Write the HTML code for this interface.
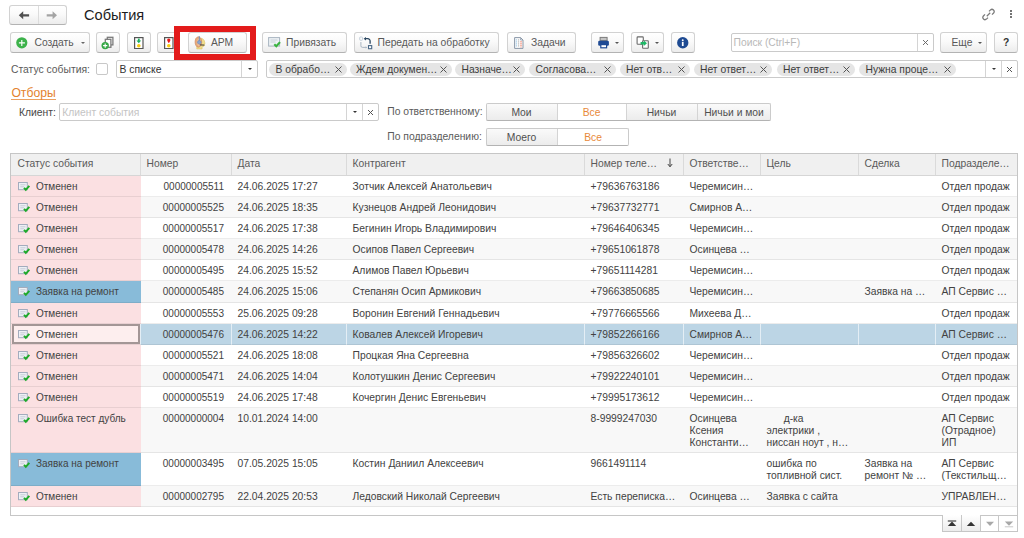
<!DOCTYPE html><html><head><meta charset="utf-8"><style>
*{box-sizing:border-box;margin:0;padding:0}
html,body{width:1024px;height:538px;overflow:hidden;background:#fff}
body{position:relative;font-family:"Liberation Sans",sans-serif;font-size:10.3px;color:#404040}
.ab{position:absolute}
.btn{position:absolute;top:32px;height:21px;border:1px solid #d2d2d2;border-bottom-color:#b3b3b3;border-radius:3px;background:linear-gradient(#ffffff 0%,#fafafa 45%,#ececec 100%);color:#505050;white-space:nowrap}
.t{position:absolute;white-space:nowrap;line-height:1}
.bt{position:absolute;white-space:nowrap;line-height:1;top:37.9px;color:#585858}
.fld{position:absolute;border:1px solid #cacaca;background:#fff;border-radius:2px}
.tag{position:absolute;height:13px;top:63px;border-radius:6.5px;background:#e5e5e5;color:#3c3c3c}
.tag span{position:absolute;left:6.5px;top:1.5px;line-height:1;white-space:nowrap}
.tag i{position:absolute;right:5px;top:3px;width:7px;height:7px}
.dd{position:absolute;width:0;height:0;border-left:2px solid transparent;border-right:2px solid transparent;border-top:2.5px solid #444}
.row{position:absolute;left:11px;width:1006px}
.c{position:absolute;top:0;height:100%;overflow:hidden}
.c span{position:absolute;white-space:nowrap;line-height:11.8px;color:#424242}
.sep{position:absolute;width:1px;background:#d4d4d4}
</style></head><body>
<div class="btn" style="left:9px;top:5px;width:58px;height:20px"></div>
<div class="ab" style="left:38px;top:6px;width:1px;height:18px;background:#dcdcdc"></div>
<svg class="ab" style="left:18px;top:11px" width="12" height="9" viewBox="0 0 12 9"><path d="M0.8 4.3L5.2 0.3V3.2H11.1V5.4H5.2V8.3Z" fill="#505050"/></svg>
<svg class="ab" style="left:46px;top:11px" width="12" height="9" viewBox="0 0 12 9"><path d="M11 4.3L6.6 0.3V3.2H0.7V5.4H6.6V8.3Z" fill="#a4a4a4"/></svg>
<div class="t" style="left:84px;top:8px;font-size:14.6px;color:#1c1c1c">События</div>
<svg class="ab" style="left:981.5px;top:8px" width="13" height="13" viewBox="0 0 13 13"><path d="M7 3.4l1.5-1.5a2.2 2.2 0 0 1 3.1 3.1L10 6.6M6 9.6l-1.5 1.5a2.2 2.2 0 0 1-3.1-3.1L3 6.4M4.8 8.2l3.4-3.4" stroke="#7a7a7a" stroke-width="1.25" fill="none"/></svg>
<div class="ab" style="left:1009.8px;top:10px;width:2.4px;height:2.4px;background:#747474"></div>
<div class="ab" style="left:1009.8px;top:13px;width:2.4px;height:2.4px;background:#747474"></div>
<div class="ab" style="left:1009.8px;top:16px;width:2.4px;height:2.4px;background:#747474"></div>
<div class="btn" style="left:10px;width:80px"></div>
<svg class="ab" style="left:16.4px;top:36.8px" width="12" height="12" viewBox="0 0 12 12"><circle cx="5.8" cy="5.8" r="5.6" fill="#3db24b"/><path d="M5.8 2.9v6M2.9 5.8h6" stroke="#fff" stroke-width="1.15"/></svg>
<div class="bt" style="left:34.5px">Создать</div>
<div class="dd" style="left:80.8px;top:42.3px;border-top-color:#666"></div>
<div class="btn" style="left:96px;width:24px"></div>
<svg class="ab" style="left:101px;top:36px" width="13" height="14" viewBox="0 0 13 14"><rect x="6.3" y="1.3" width="5.6" height="7.6" fill="#fff" stroke="#7a7a7a" stroke-width="1.3"/><rect x="4.3" y="3.3" width="5.6" height="8" fill="#fff" stroke="#7a7a7a" stroke-width="1.3"/><circle cx="4.2" cy="9.6" r="3.7" fill="#36a846"/><path d="M4.2 7.5v4.2M2.1 9.6h4.2" stroke="#fff" stroke-width="1.1"/></svg>
<div class="btn" style="left:127px;width:24px"></div>
<svg class="ab" style="left:134px;top:37px" width="10" height="12" viewBox="0 0 10 12"><rect x="0.6" y="0.6" width="8.4" height="11" fill="#fff" stroke="#555" stroke-width="1.2"/><path d="M4.8 1.6v2.6" stroke="#1fb060" stroke-width="1.8"/><path d="M2.4 3.6h4.8L4.8 6.2z" fill="#1fb060"/><circle cx="4.8" cy="8.8" r="1.8" fill="#f8cc10"/></svg>
<div class="btn" style="left:157px;width:24px"></div>
<svg class="ab" style="left:164px;top:37px" width="10" height="12" viewBox="0 0 10 12"><rect x="0.6" y="0.6" width="8.4" height="11" fill="#fff" stroke="#555" stroke-width="1.2"/><path d="M4.8 1.5c1.2 0 1.6.8 1.6 1.4 0 .7-.9 2.3-1.6 3.2C4.1 5.2 3.2 3.6 3.2 2.9c0-.6.4-1.4 1.6-1.4z" fill="#e81818"/><circle cx="4.8" cy="8.8" r="1.8" fill="#f8cc10"/></svg>
<div class="ab" style="left:174px;top:26px;width:82px;height:34px;border:6px solid #e31b1b;background:#fff"></div>
<div class="btn" style="left:188px;width:59px"></div>
<svg class="ab" style="left:192px;top:34px" width="16" height="17" viewBox="0 0 16 17"><path d="M7.5 4.3C10.4 3.8 12.6 5.8 12.6 8.2L13.1 9.4L12.3 9.9V11.3C12.3 12 11.8 12.4 11.1 12.4H10.1V14.9H4.8V12.3Z" fill="#f2e08e" stroke="#dcc060" stroke-width=".6"/><ellipse cx="6.4" cy="8" rx="3.3" ry="5.2" fill="#e6aa7c" stroke="#cf8a60" stroke-width=".7"/><ellipse cx="6.9" cy="8.3" rx="1.6" ry="3.8" fill="#f0c098"/><path d="M7.3 2.2V8" stroke="#6f8fc0" stroke-width="1"/><circle cx="7.3" cy="8.3" r="1.8" fill="#88a4d0" stroke="#6a88b8" stroke-width=".6"/><path d="M7.8 10.9L12.4 11.1" stroke="#3a3a3a" stroke-width="1"/></svg>
<div class="bt" style="left:211px">АРМ</div>
<div class="btn" style="left:262px;width:85px"></div>
<svg class="ab" style="left:267.5px;top:37px" width="13" height="11" viewBox="0 0 13 11"><rect x="0.6" y="0.6" width="11" height="8.5" fill="#eef2f6" stroke="#a8b4c0" stroke-width="1"/><path d="M2.5 3h7M2.5 5h5" stroke="#c8d0d8" stroke-width="1"/><path d="M6.3 7.3l2 2 3.7-4.2" stroke="#3ab440" stroke-width="2.1" fill="none"/></svg>
<div class="bt" style="left:286px">Привязать</div>
<div class="btn" style="left:354px;width:145px"></div>
<svg class="ab" style="left:359px;top:36px" width="14" height="14" viewBox="0 0 14 14"><rect x="0.7" y="1" width="2.8" height="3.3" rx=".7" fill="none" stroke="#c0ccd8" stroke-width="0.9"/><rect x="9.5" y="9.6" width="3.2" height="3.1" fill="#fff" stroke="#4a6886" stroke-width="1.1"/><path d="M6.6 2.7h2.2a2.3 2.3 0 0 1 2.3 2.3v2.8" stroke="#2a4660" stroke-width="1.3" fill="none"/><path d="M4.6 2.7L7 0.9v3.6z" fill="#2a4660"/><path d="M1.9 6v3.8a1.6 1.6 0 0 0 1.6 1.6h3.4" stroke="#a0aebc" stroke-width="0.9" fill="none"/><path d="M6.6 10.2l1.6 1.2-1.6 1.2z" fill="#a0aebc"/></svg>
<div class="bt" style="left:377.5px">Передать на обработку</div>
<div class="btn" style="left:507px;width:69px"></div>
<svg class="ab" style="left:514px;top:37px" width="10" height="12" viewBox="0 0 10 12"><path d="M0.6 0.6h6l2.4 2.4v8.4H0.6z" fill="#fbfbfb" stroke="#8a98a8" stroke-width="1"/><path d="M6.6 0.6v2.4H9" fill="none" stroke="#8a98a8" stroke-width=".8"/><path d="M2.4 2.2v8" stroke="#a8d0ea" stroke-width="1.3" stroke-dasharray="1.4 .6"/><path d="M4.6 2.2v8" stroke="#bcbcbc" stroke-width="1" stroke-dasharray="1.4 .6"/><path d="M7 4v6.4" stroke="#f5a595" stroke-width="1.5" stroke-dasharray="1.4 .6"/></svg>
<div class="bt" style="left:531px">Задачи</div>
<div class="btn" style="left:591px;width:33px"></div>
<svg class="ab" style="left:598px;top:36px" width="12" height="13" viewBox="0 0 12 13"><rect x="2.1" y="1.4" width="7" height="3.2" fill="#c4c4c4" stroke="#7c7c7c" stroke-width="1"/><rect x="0.2" y="4.8" width="10.7" height="5" rx="1.3" fill="#1f4a94"/><rect x="2.8" y="8.6" width="5.8" height="3.2" fill="#fff" stroke="#1f4a94" stroke-width="1.2"/></svg>
<div class="dd" style="left:614.8px;top:42.3px;border-top-color:#555"></div>
<div class="btn" style="left:631px;width:33px"></div>
<svg class="ab" style="left:636px;top:36px" width="14" height="14" viewBox="0 0 14 14"><rect x="1.1" y="0.9" width="6.2" height="7.4" rx=".8" fill="#fff" stroke="#6a6a6a" stroke-width="1.1"/><rect x="6.6" y="4.7" width="5.7" height="7.5" rx=".5" fill="#fff" stroke="#6a6a6a" stroke-width="1.1"/><path d="M4.6 6h3.2v-1.6l3.2 2.8-3.2 2.8v-1.6H4.6z" fill="#1db866"/></svg>
<div class="dd" style="left:654.8px;top:42.3px;border-top-color:#555"></div>
<div class="btn" style="left:671px;width:24px"></div>
<svg class="ab" style="left:677px;top:37px" width="11.5" height="11.5" viewBox="0 0 12 12"><circle cx="6" cy="6" r="5.9" fill="#1e4a92"/><rect x="5.1" y="5" width="1.8" height="4.4" fill="#fff"/><circle cx="6" cy="3.3" r="1" fill="#fff"/></svg>
<div class="fld" style="left:731px;top:33px;width:203px;height:19px"></div>
<div class="sep" style="left:917px;top:34px;height:17px"></div>
<div class="t" style="left:733.5px;top:37.5px;color:#b8b8b8">Поиск (Ctrl+F)</div>
<svg class="ab" style="left:922px;top:39px" width="7" height="7" viewBox="0 0 7 7"><path d="M1 1l5 5M6 1L1 6" stroke="#606060" stroke-width="0.9"/></svg>
<div class="btn" style="left:940px;width:47px"></div>
<div class="bt" style="left:951.5px">Еще</div>
<div class="dd" style="left:978.2px;top:42.3px;border-top-color:#555"></div>
<div class="btn" style="left:994px;width:24px"></div>
<div class="bt" style="left:1003px;color:#333;font-weight:bold">?</div>
<div class="t" style="left:11px;top:65px;font-size:10.35px;color:#5a5a5a">Статус события:</div>
<div class="fld" style="left:96px;top:63px;width:12px;height:12px;border-color:#c8c8c8"></div>
<div class="fld" style="left:116px;top:60px;width:142px;height:18px"></div>
<div class="sep" style="left:241px;top:61px;height:16px"></div>
<div class="dd" style="left:247.8px;top:68.3px;border-top-color:#333"></div>
<div class="t" style="left:119.5px;top:65px;font-size:10.35px;color:#333">В списке</div>
<div class="fld" style="left:266px;top:60px;width:752px;height:18px"></div>
<div class="sep" style="left:985px;top:61px;height:16px"></div>
<div class="sep" style="left:1001px;top:61px;height:16px"></div>
<div class="dd" style="left:991.5px;top:68.3px;border-top-color:#333"></div>
<svg class="ab" style="left:1006px;top:66px" width="7" height="7" viewBox="0 0 7 7"><path d="M1 1l5 5M6 1L1 6" stroke="#555" stroke-width="1"/></svg>
<div class="tag" style="left:269px;width:77.7px"><span>В обрабо…</span><i><svg width="7" height="7" viewBox="0 0 7 7" style="display:block"><path d="M0.5 0.5l6 6M6.5 0.5l-6 6" stroke="#555" stroke-width="1"/></svg></i></div>
<div class="tag" style="left:349.5px;width:102.7px"><span>Ждем докумен…</span><i><svg width="7" height="7" viewBox="0 0 7 7" style="display:block"><path d="M0.5 0.5l6 6M6.5 0.5l-6 6" stroke="#555" stroke-width="1"/></svg></i></div>
<div class="tag" style="left:455px;width:70.2px"><span>Назначе…</span><i><svg width="7" height="7" viewBox="0 0 7 7" style="display:block"><path d="M0.5 0.5l6 6M6.5 0.5l-6 6" stroke="#555" stroke-width="1"/></svg></i></div>
<div class="tag" style="left:529px;width:87.2px"><span>Согласова…</span><i><svg width="7" height="7" viewBox="0 0 7 7" style="display:block"><path d="M0.5 0.5l6 6M6.5 0.5l-6 6" stroke="#555" stroke-width="1"/></svg></i></div>
<div class="tag" style="left:619.5px;width:70.2px"><span>Нет отв…</span><i><svg width="7" height="7" viewBox="0 0 7 7" style="display:block"><path d="M0.5 0.5l6 6M6.5 0.5l-6 6" stroke="#555" stroke-width="1"/></svg></i></div>
<div class="tag" style="left:693.5px;width:78.2px"><span>Нет ответ…</span><i><svg width="7" height="7" viewBox="0 0 7 7" style="display:block"><path d="M0.5 0.5l6 6M6.5 0.5l-6 6" stroke="#555" stroke-width="1"/></svg></i></div>
<div class="tag" style="left:776.5px;width:78.2px"><span>Нет ответ…</span><i><svg width="7" height="7" viewBox="0 0 7 7" style="display:block"><path d="M0.5 0.5l6 6M6.5 0.5l-6 6" stroke="#555" stroke-width="1"/></svg></i></div>
<div class="tag" style="left:859px;width:96.7px"><span>Нужна проце…</span><i><svg width="7" height="7" viewBox="0 0 7 7" style="display:block"><path d="M0.5 0.5l6 6M6.5 0.5l-6 6" stroke="#555" stroke-width="1"/></svg></i></div>
<div class="t" style="left:11.4px;top:88px;font-size:12.2px;color:#e3822d;border-bottom:1px solid #eaa060;line-height:11px;height:12px">Отборы</div>
<div class="t" style="left:19px;top:108px;font-size:10.35px;color:#484848">Клиент:</div>
<div class="fld" style="left:59px;top:103px;width:320px;height:18px"></div>
<div class="sep" style="left:346px;top:104px;height:16px"></div>
<div class="sep" style="left:362px;top:104px;height:16px"></div>
<div class="dd" style="left:352.5px;top:111px;border-top-color:#333"></div>
<svg class="ab" style="left:366.5px;top:108.5px" width="7" height="7" viewBox="0 0 7 7"><path d="M1 1l5 5M6 1L1 6" stroke="#555" stroke-width="1"/></svg>
<div class="t" style="left:62.3px;top:108px;color:#c4c4c4">Клиент события</div>
<div class="t" style="left:387.3px;top:107.3px;font-size:10.35px;color:#5a5a5a">По ответственному:</div>
<div class="t" style="left:387.3px;top:131.5px;font-size:10.35px;color:#5a5a5a">По подразделению:</div>
<div class="ab" style="left:486px;top:103px;width:71px;height:18px;background:linear-gradient(#fbfbfb,#ebebeb);"></div>
<div class="t" style="left:486px;width:71px;text-align:center;top:108px;color:#4f4f4f">Мои</div>
<div class="ab" style="left:557px;top:103px;width:69px;height:18px;background:#fff;"></div>
<div class="t" style="left:557px;width:69px;text-align:center;top:108px;color:#e8893a">Все</div>
<div class="ab" style="left:626px;top:103px;width:71px;height:18px;background:linear-gradient(#fbfbfb,#ebebeb);"></div>
<div class="t" style="left:626px;width:71px;text-align:center;top:108px;color:#4f4f4f">Ничьи</div>
<div class="ab" style="left:697px;top:103px;width:74px;height:18px;background:linear-gradient(#fbfbfb,#ebebeb);"></div>
<div class="t" style="left:697px;width:74px;text-align:center;top:108px;color:#4f4f4f">Ничьи и мои</div>
<div class="ab" style="left:486px;top:103px;width:285px;height:18px;border:1px solid #cbcbcb;border-bottom-color:#b3b3b3;border-radius:2px"></div>
<div class="sep" style="left:557px;top:104px;height:16px"></div>
<div class="sep" style="left:626px;top:104px;height:16px"></div>
<div class="sep" style="left:697px;top:104px;height:16px"></div>
<div class="ab" style="left:486px;top:128px;width:71px;height:18px;background:linear-gradient(#fbfbfb,#ebebeb);"></div>
<div class="t" style="left:486px;width:71px;text-align:center;top:133px;color:#4f4f4f">Моего</div>
<div class="ab" style="left:557px;top:128px;width:72px;height:18px;background:#fff;"></div>
<div class="t" style="left:557px;width:72px;text-align:center;top:133px;color:#e8893a">Все</div>
<div class="ab" style="left:486px;top:128px;width:143px;height:18px;border:1px solid #cbcbcb;border-bottom-color:#b3b3b3;border-radius:2px"></div>
<div class="sep" style="left:557px;top:129px;height:16px"></div>
<div class="ab" style="left:10px;top:153px;width:1008px;height:363px;border:1px solid #c6c6c6"></div>
<div class="ab" style="left:11px;top:154px;width:1006px;height:22px;background:#f0f0f0;border-bottom:1px solid #d6d6d6"></div>
<div class="t" style="left:17.5px;top:159px;color:#5a5a5a">Статус события</div>
<div class="t" style="left:146.5px;top:159px;color:#5a5a5a">Номер</div>
<div class="ab" style="left:140px;top:154px;width:1px;height:21px;background:#dadada"></div>
<div class="t" style="left:237.5px;top:159px;color:#5a5a5a">Дата</div>
<div class="ab" style="left:231px;top:154px;width:1px;height:21px;background:#dadada"></div>
<div class="t" style="left:352.5px;top:159px;color:#5a5a5a">Контрагент</div>
<div class="ab" style="left:346px;top:154px;width:1px;height:21px;background:#dadada"></div>
<div class="t" style="left:590.5px;top:159px;color:#5a5a5a">Номер теле…</div>
<div class="ab" style="left:584px;top:154px;width:1px;height:21px;background:#dadada"></div>
<div class="t" style="left:689.5px;top:159px;color:#5a5a5a">Ответстве…</div>
<div class="ab" style="left:683px;top:154px;width:1px;height:21px;background:#dadada"></div>
<div class="t" style="left:766.5px;top:159px;color:#5a5a5a">Цель</div>
<div class="ab" style="left:760px;top:154px;width:1px;height:21px;background:#dadada"></div>
<div class="t" style="left:864.5px;top:159px;color:#5a5a5a">Сделка</div>
<div class="ab" style="left:858px;top:154px;width:1px;height:21px;background:#dadada"></div>
<div class="t" style="left:941.5px;top:159px;color:#5a5a5a">Подразделе…</div>
<div class="ab" style="left:935px;top:154px;width:1px;height:21px;background:#dadada"></div>
<svg class="ab" style="left:667px;top:158px" width="6" height="10" viewBox="0 0 6 10"><path d="M3 0.5v8M0.8 6l2.2 2.8L5.2 6" stroke="#444" stroke-width="1" fill="none"/></svg>
<div class="row" style="top:176px;height:21px;background:#ffffff">
<div class="c" style="left:0;width:130px;background:#fbe0e2"><svg class="ab" style="left:7px;top:5.5px" width="13" height="10" viewBox="0 0 13 10"><rect x="0.5" y="0.5" width="8.8" height="7.2" fill="#eef0f5" stroke="#a3acbd" stroke-width="1"/><path d="M2.3 2.8h5.2M2.3 4.8h3.8" stroke="#c5cbd6" stroke-width="1"/><path d="M6 5.9l1.8 1.9 3.5-3.9" stroke="#1eaa2a" stroke-width="2" fill="none"/></svg><span style="left:25px;top:4.8px;font-size:10px">Отменен</span></div>
<div class="c" style="left:129px;width:91px"><span style="right:7px;top:4.8px;font-size:10px">00000005511</span></div>
<div class="c" style="left:220px;width:115px"><span style="left:6.5px;top:4.8px">24.06.2025 17:27</span></div>
<div class="c" style="left:335px;width:238px"><span style="left:6.5px;top:4.8px">Зотчик Алексей Анатольевич</span></div>
<div class="c" style="left:573px;width:99px"><span style="left:6.5px;top:4.8px">+79636763186</span></div>
<div class="c" style="left:672px;width:77px"><span style="left:6.5px;top:4.8px">Черемисин…</span></div>
<div class="c" style="left:749px;width:98px"><span style="left:6.5px;top:4.8px"></span></div>
<div class="c" style="left:847px;width:77px"><span style="left:6.5px;top:4.8px"></span></div>
<div class="c" style="left:924px;width:82px"><span style="left:6.5px;top:4.8px">Отдел продаж</span></div>
<div class="ab" style="left:0;top:20px;width:1006px;height:1px;background:rgba(0,0,0,0.075)"></div>
</div>
<div class="row" style="top:197px;height:21px;background:#f8f8f8">
<div class="c" style="left:0;width:130px;background:#fbe0e2"><svg class="ab" style="left:7px;top:5.5px" width="13" height="10" viewBox="0 0 13 10"><rect x="0.5" y="0.5" width="8.8" height="7.2" fill="#eef0f5" stroke="#a3acbd" stroke-width="1"/><path d="M2.3 2.8h5.2M2.3 4.8h3.8" stroke="#c5cbd6" stroke-width="1"/><path d="M6 5.9l1.8 1.9 3.5-3.9" stroke="#1eaa2a" stroke-width="2" fill="none"/></svg><span style="left:25px;top:4.8px;font-size:10px">Отменен</span></div>
<div class="c" style="left:129px;width:91px"><span style="right:7px;top:4.8px;font-size:10px">00000005525</span></div>
<div class="c" style="left:220px;width:115px"><span style="left:6.5px;top:4.8px">24.06.2025 18:35</span></div>
<div class="c" style="left:335px;width:238px"><span style="left:6.5px;top:4.8px">Кузнецов Андрей Леонидович</span></div>
<div class="c" style="left:573px;width:99px"><span style="left:6.5px;top:4.8px">+79637732771</span></div>
<div class="c" style="left:672px;width:77px"><span style="left:6.5px;top:4.8px">Смирнов А…</span></div>
<div class="c" style="left:749px;width:98px"><span style="left:6.5px;top:4.8px"></span></div>
<div class="c" style="left:847px;width:77px"><span style="left:6.5px;top:4.8px"></span></div>
<div class="c" style="left:924px;width:82px"><span style="left:6.5px;top:4.8px">Отдел продаж</span></div>
<div class="ab" style="left:0;top:20px;width:1006px;height:1px;background:rgba(0,0,0,0.075)"></div>
</div>
<div class="row" style="top:218px;height:21px;background:#ffffff">
<div class="c" style="left:0;width:130px;background:#fbe0e2"><svg class="ab" style="left:7px;top:5.5px" width="13" height="10" viewBox="0 0 13 10"><rect x="0.5" y="0.5" width="8.8" height="7.2" fill="#eef0f5" stroke="#a3acbd" stroke-width="1"/><path d="M2.3 2.8h5.2M2.3 4.8h3.8" stroke="#c5cbd6" stroke-width="1"/><path d="M6 5.9l1.8 1.9 3.5-3.9" stroke="#1eaa2a" stroke-width="2" fill="none"/></svg><span style="left:25px;top:4.8px;font-size:10px">Отменен</span></div>
<div class="c" style="left:129px;width:91px"><span style="right:7px;top:4.8px;font-size:10px">00000005517</span></div>
<div class="c" style="left:220px;width:115px"><span style="left:6.5px;top:4.8px">24.06.2025 17:38</span></div>
<div class="c" style="left:335px;width:238px"><span style="left:6.5px;top:4.8px">Бегинин Игорь Владимирович</span></div>
<div class="c" style="left:573px;width:99px"><span style="left:6.5px;top:4.8px">+79646406345</span></div>
<div class="c" style="left:672px;width:77px"><span style="left:6.5px;top:4.8px">Черемисин…</span></div>
<div class="c" style="left:749px;width:98px"><span style="left:6.5px;top:4.8px"></span></div>
<div class="c" style="left:847px;width:77px"><span style="left:6.5px;top:4.8px"></span></div>
<div class="c" style="left:924px;width:82px"><span style="left:6.5px;top:4.8px">Отдел продаж</span></div>
<div class="ab" style="left:0;top:20px;width:1006px;height:1px;background:rgba(0,0,0,0.075)"></div>
</div>
<div class="row" style="top:239px;height:21px;background:#f8f8f8">
<div class="c" style="left:0;width:130px;background:#fbe0e2"><svg class="ab" style="left:7px;top:5.5px" width="13" height="10" viewBox="0 0 13 10"><rect x="0.5" y="0.5" width="8.8" height="7.2" fill="#eef0f5" stroke="#a3acbd" stroke-width="1"/><path d="M2.3 2.8h5.2M2.3 4.8h3.8" stroke="#c5cbd6" stroke-width="1"/><path d="M6 5.9l1.8 1.9 3.5-3.9" stroke="#1eaa2a" stroke-width="2" fill="none"/></svg><span style="left:25px;top:4.8px;font-size:10px">Отменен</span></div>
<div class="c" style="left:129px;width:91px"><span style="right:7px;top:4.8px;font-size:10px">00000005478</span></div>
<div class="c" style="left:220px;width:115px"><span style="left:6.5px;top:4.8px">24.06.2025 14:26</span></div>
<div class="c" style="left:335px;width:238px"><span style="left:6.5px;top:4.8px">Осипов Павел Сергеевич</span></div>
<div class="c" style="left:573px;width:99px"><span style="left:6.5px;top:4.8px">+79651061878</span></div>
<div class="c" style="left:672px;width:77px"><span style="left:6.5px;top:4.8px">Осинцева …</span></div>
<div class="c" style="left:749px;width:98px"><span style="left:6.5px;top:4.8px"></span></div>
<div class="c" style="left:847px;width:77px"><span style="left:6.5px;top:4.8px"></span></div>
<div class="c" style="left:924px;width:82px"><span style="left:6.5px;top:4.8px">Отдел продаж</span></div>
<div class="ab" style="left:0;top:20px;width:1006px;height:1px;background:rgba(0,0,0,0.075)"></div>
</div>
<div class="row" style="top:260px;height:21px;background:#ffffff">
<div class="c" style="left:0;width:130px;background:#fbe0e2"><svg class="ab" style="left:7px;top:5.5px" width="13" height="10" viewBox="0 0 13 10"><rect x="0.5" y="0.5" width="8.8" height="7.2" fill="#eef0f5" stroke="#a3acbd" stroke-width="1"/><path d="M2.3 2.8h5.2M2.3 4.8h3.8" stroke="#c5cbd6" stroke-width="1"/><path d="M6 5.9l1.8 1.9 3.5-3.9" stroke="#1eaa2a" stroke-width="2" fill="none"/></svg><span style="left:25px;top:4.8px;font-size:10px">Отменен</span></div>
<div class="c" style="left:129px;width:91px"><span style="right:7px;top:4.8px;font-size:10px">00000005495</span></div>
<div class="c" style="left:220px;width:115px"><span style="left:6.5px;top:4.8px">24.06.2025 15:52</span></div>
<div class="c" style="left:335px;width:238px"><span style="left:6.5px;top:4.8px">Алимов Павел Юрьевич</span></div>
<div class="c" style="left:573px;width:99px"><span style="left:6.5px;top:4.8px">+79651114281</span></div>
<div class="c" style="left:672px;width:77px"><span style="left:6.5px;top:4.8px">Черемисин…</span></div>
<div class="c" style="left:749px;width:98px"><span style="left:6.5px;top:4.8px"></span></div>
<div class="c" style="left:847px;width:77px"><span style="left:6.5px;top:4.8px"></span></div>
<div class="c" style="left:924px;width:82px"><span style="left:6.5px;top:4.8px">Отдел продаж</span></div>
<div class="ab" style="left:0;top:20px;width:1006px;height:1px;background:rgba(0,0,0,0.075)"></div>
</div>
<div class="row" style="top:281px;height:22px;background:#f8f8f8">
<div class="c" style="left:0;width:130px;background:#88bbd9"><svg class="ab" style="left:7px;top:5.5px" width="13" height="10" viewBox="0 0 13 10"><rect x="0.5" y="0.5" width="8.8" height="7.2" fill="#eef0f5" stroke="#a3acbd" stroke-width="1"/><path d="M2.3 2.8h5.2M2.3 4.8h3.8" stroke="#c5cbd6" stroke-width="1"/><path d="M6 5.9l1.8 1.9 3.5-3.9" stroke="#1eaa2a" stroke-width="2" fill="none"/></svg><span style="left:25px;top:4.8px;font-size:10px">Заявка на ремонт</span></div>
<div class="c" style="left:129px;width:91px"><span style="right:7px;top:4.8px;font-size:10px">00000005485</span></div>
<div class="c" style="left:220px;width:115px"><span style="left:6.5px;top:4.8px">24.06.2025 15:06</span></div>
<div class="c" style="left:335px;width:238px"><span style="left:6.5px;top:4.8px">Степанян Осип Армикович</span></div>
<div class="c" style="left:573px;width:99px"><span style="left:6.5px;top:4.8px">+79663850685</span></div>
<div class="c" style="left:672px;width:77px"><span style="left:6.5px;top:4.8px">Черемисин…</span></div>
<div class="c" style="left:749px;width:98px"><span style="left:6.5px;top:4.8px"></span></div>
<div class="c" style="left:847px;width:77px"><span style="left:6.5px;top:4.8px">Заявка на …</span></div>
<div class="c" style="left:924px;width:82px"><span style="left:6.5px;top:4.8px">АП Сервис …</span></div>
<div class="ab" style="left:0;top:21px;width:1006px;height:1px;background:rgba(0,0,0,0.075)"></div>
</div>
<div class="row" style="top:303px;height:21px;background:#ffffff">
<div class="c" style="left:0;width:130px;background:#fbe0e2"><svg class="ab" style="left:7px;top:5.5px" width="13" height="10" viewBox="0 0 13 10"><rect x="0.5" y="0.5" width="8.8" height="7.2" fill="#eef0f5" stroke="#a3acbd" stroke-width="1"/><path d="M2.3 2.8h5.2M2.3 4.8h3.8" stroke="#c5cbd6" stroke-width="1"/><path d="M6 5.9l1.8 1.9 3.5-3.9" stroke="#1eaa2a" stroke-width="2" fill="none"/></svg><span style="left:25px;top:4.8px;font-size:10px">Отменен</span></div>
<div class="c" style="left:129px;width:91px"><span style="right:7px;top:4.8px;font-size:10px">00000005553</span></div>
<div class="c" style="left:220px;width:115px"><span style="left:6.5px;top:4.8px">25.06.2025 09:28</span></div>
<div class="c" style="left:335px;width:238px"><span style="left:6.5px;top:4.8px">Воронин Евгений Геннадьевич</span></div>
<div class="c" style="left:573px;width:99px"><span style="left:6.5px;top:4.8px">+79776665566</span></div>
<div class="c" style="left:672px;width:77px"><span style="left:6.5px;top:4.8px">Михеева Д…</span></div>
<div class="c" style="left:749px;width:98px"><span style="left:6.5px;top:4.8px"></span></div>
<div class="c" style="left:847px;width:77px"><span style="left:6.5px;top:4.8px"></span></div>
<div class="c" style="left:924px;width:82px"><span style="left:6.5px;top:4.8px">Отдел продаж</span></div>
<div class="ab" style="left:0;top:20px;width:1006px;height:1px;background:rgba(0,0,0,0.075)"></div>
</div>
<div class="row" style="top:324px;height:21px;background:#bcd5e5">
<div class="c" style="left:0;width:130px;background:#fbe0e2"><svg class="ab" style="left:7px;top:5.5px" width="13" height="10" viewBox="0 0 13 10"><rect x="0.5" y="0.5" width="8.8" height="7.2" fill="#eef0f5" stroke="#a3acbd" stroke-width="1"/><path d="M2.3 2.8h5.2M2.3 4.8h3.8" stroke="#c5cbd6" stroke-width="1"/><path d="M6 5.9l1.8 1.9 3.5-3.9" stroke="#1eaa2a" stroke-width="2" fill="none"/></svg><span style="left:25px;top:4.8px;font-size:10px">Отменен</span></div>
<div class="ab" style="left:1px;top:0px;width:128px;height:20px;border:2px solid #a39696;background:#fdeeee"></div>
<div class="c" style="left:0;top:0;width:129px;height:20px"><svg class="ab" style="left:7px;top:5.5px" width="13" height="10" viewBox="0 0 13 10"><rect x="0.5" y="0.5" width="8.8" height="7.2" fill="#eef0f5" stroke="#a3acbd" stroke-width="1"/><path d="M2.3 2.8h5.2M2.3 4.8h3.8" stroke="#c5cbd6" stroke-width="1"/><path d="M6 5.9l1.8 1.9 3.5-3.9" stroke="#1eaa2a" stroke-width="2" fill="none"/></svg><span style="left:25px;top:4.8px;font-size:10px">Отменен</span></div>
<div class="c" style="left:129px;width:91px"><span style="right:7px;top:4.8px;font-size:10px">00000005476</span></div>
<div class="ab" style="left:129px;top:0;width:1px;height:100%;background:#e4eef5"></div>
<div class="c" style="left:220px;width:115px"><span style="left:6.5px;top:4.8px">24.06.2025 14:22</span></div>
<div class="ab" style="left:220px;top:0;width:1px;height:100%;background:#e4eef5"></div>
<div class="c" style="left:335px;width:238px"><span style="left:6.5px;top:4.8px">Ковалев Алексей Игоревич</span></div>
<div class="ab" style="left:335px;top:0;width:1px;height:100%;background:#e4eef5"></div>
<div class="c" style="left:573px;width:99px"><span style="left:6.5px;top:4.8px">+79852266166</span></div>
<div class="ab" style="left:573px;top:0;width:1px;height:100%;background:#e4eef5"></div>
<div class="c" style="left:672px;width:77px"><span style="left:6.5px;top:4.8px">Смирнов А…</span></div>
<div class="ab" style="left:672px;top:0;width:1px;height:100%;background:#e4eef5"></div>
<div class="c" style="left:749px;width:98px"><span style="left:6.5px;top:4.8px"></span></div>
<div class="ab" style="left:749px;top:0;width:1px;height:100%;background:#e4eef5"></div>
<div class="c" style="left:847px;width:77px"><span style="left:6.5px;top:4.8px"></span></div>
<div class="ab" style="left:847px;top:0;width:1px;height:100%;background:#e4eef5"></div>
<div class="c" style="left:924px;width:82px"><span style="left:6.5px;top:4.8px">АП Сервис …</span></div>
<div class="ab" style="left:924px;top:0;width:1px;height:100%;background:#e4eef5"></div>
<div class="ab" style="left:0;top:20px;width:1006px;height:1px;background:rgba(0,0,0,0.075)"></div>
</div>
<div class="row" style="top:345px;height:21px;background:#ffffff">
<div class="c" style="left:0;width:130px;background:#fbe0e2"><svg class="ab" style="left:7px;top:5.5px" width="13" height="10" viewBox="0 0 13 10"><rect x="0.5" y="0.5" width="8.8" height="7.2" fill="#eef0f5" stroke="#a3acbd" stroke-width="1"/><path d="M2.3 2.8h5.2M2.3 4.8h3.8" stroke="#c5cbd6" stroke-width="1"/><path d="M6 5.9l1.8 1.9 3.5-3.9" stroke="#1eaa2a" stroke-width="2" fill="none"/></svg><span style="left:25px;top:4.8px;font-size:10px">Отменен</span></div>
<div class="c" style="left:129px;width:91px"><span style="right:7px;top:4.8px;font-size:10px">00000005521</span></div>
<div class="c" style="left:220px;width:115px"><span style="left:6.5px;top:4.8px">24.06.2025 18:08</span></div>
<div class="c" style="left:335px;width:238px"><span style="left:6.5px;top:4.8px">Процкая Яна Сергеевна</span></div>
<div class="c" style="left:573px;width:99px"><span style="left:6.5px;top:4.8px">+79856326602</span></div>
<div class="c" style="left:672px;width:77px"><span style="left:6.5px;top:4.8px">Черемисин…</span></div>
<div class="c" style="left:749px;width:98px"><span style="left:6.5px;top:4.8px"></span></div>
<div class="c" style="left:847px;width:77px"><span style="left:6.5px;top:4.8px"></span></div>
<div class="c" style="left:924px;width:82px"><span style="left:6.5px;top:4.8px">Отдел продаж</span></div>
<div class="ab" style="left:0;top:20px;width:1006px;height:1px;background:rgba(0,0,0,0.075)"></div>
</div>
<div class="row" style="top:366px;height:21px;background:#f8f8f8">
<div class="c" style="left:0;width:130px;background:#fbe0e2"><svg class="ab" style="left:7px;top:5.5px" width="13" height="10" viewBox="0 0 13 10"><rect x="0.5" y="0.5" width="8.8" height="7.2" fill="#eef0f5" stroke="#a3acbd" stroke-width="1"/><path d="M2.3 2.8h5.2M2.3 4.8h3.8" stroke="#c5cbd6" stroke-width="1"/><path d="M6 5.9l1.8 1.9 3.5-3.9" stroke="#1eaa2a" stroke-width="2" fill="none"/></svg><span style="left:25px;top:4.8px;font-size:10px">Отменен</span></div>
<div class="c" style="left:129px;width:91px"><span style="right:7px;top:4.8px;font-size:10px">00000005471</span></div>
<div class="c" style="left:220px;width:115px"><span style="left:6.5px;top:4.8px">24.06.2025 14:04</span></div>
<div class="c" style="left:335px;width:238px"><span style="left:6.5px;top:4.8px">Колотушкин Денис Сергеевич</span></div>
<div class="c" style="left:573px;width:99px"><span style="left:6.5px;top:4.8px">+79922240101</span></div>
<div class="c" style="left:672px;width:77px"><span style="left:6.5px;top:4.8px">Черемисин…</span></div>
<div class="c" style="left:749px;width:98px"><span style="left:6.5px;top:4.8px"></span></div>
<div class="c" style="left:847px;width:77px"><span style="left:6.5px;top:4.8px"></span></div>
<div class="c" style="left:924px;width:82px"><span style="left:6.5px;top:4.8px">Отдел продаж</span></div>
<div class="ab" style="left:0;top:20px;width:1006px;height:1px;background:rgba(0,0,0,0.075)"></div>
</div>
<div class="row" style="top:387px;height:21px;background:#ffffff">
<div class="c" style="left:0;width:130px;background:#fbe0e2"><svg class="ab" style="left:7px;top:5.5px" width="13" height="10" viewBox="0 0 13 10"><rect x="0.5" y="0.5" width="8.8" height="7.2" fill="#eef0f5" stroke="#a3acbd" stroke-width="1"/><path d="M2.3 2.8h5.2M2.3 4.8h3.8" stroke="#c5cbd6" stroke-width="1"/><path d="M6 5.9l1.8 1.9 3.5-3.9" stroke="#1eaa2a" stroke-width="2" fill="none"/></svg><span style="left:25px;top:4.8px;font-size:10px">Отменен</span></div>
<div class="c" style="left:129px;width:91px"><span style="right:7px;top:4.8px;font-size:10px">00000005519</span></div>
<div class="c" style="left:220px;width:115px"><span style="left:6.5px;top:4.8px">24.06.2025 17:48</span></div>
<div class="c" style="left:335px;width:238px"><span style="left:6.5px;top:4.8px">Кочергин Денис Евгеньевич</span></div>
<div class="c" style="left:573px;width:99px"><span style="left:6.5px;top:4.8px">+79995173612</span></div>
<div class="c" style="left:672px;width:77px"><span style="left:6.5px;top:4.8px">Черемисин…</span></div>
<div class="c" style="left:749px;width:98px"><span style="left:6.5px;top:4.8px"></span></div>
<div class="c" style="left:847px;width:77px"><span style="left:6.5px;top:4.8px"></span></div>
<div class="c" style="left:924px;width:82px"><span style="left:6.5px;top:4.8px">Отдел продаж</span></div>
<div class="ab" style="left:0;top:20px;width:1006px;height:1px;background:rgba(0,0,0,0.075)"></div>
</div>
<div class="row" style="top:408px;height:45px;background:#f8f8f8">
<div class="c" style="left:0;width:130px;background:#fbe0e2"><svg class="ab" style="left:7px;top:5.5px" width="13" height="10" viewBox="0 0 13 10"><rect x="0.5" y="0.5" width="8.8" height="7.2" fill="#eef0f5" stroke="#a3acbd" stroke-width="1"/><path d="M2.3 2.8h5.2M2.3 4.8h3.8" stroke="#c5cbd6" stroke-width="1"/><path d="M6 5.9l1.8 1.9 3.5-3.9" stroke="#1eaa2a" stroke-width="2" fill="none"/></svg><span style="left:25px;top:4.8px;font-size:10px">Ошибка тест дубль</span></div>
<div class="c" style="left:129px;width:91px"><span style="right:7px;top:4.8px;font-size:10px">00000000004</span></div>
<div class="c" style="left:220px;width:115px"><span style="left:6.5px;top:5.3px">10.01.2024 14:00</span></div>
<div class="c" style="left:335px;width:238px"><span style="left:6.5px;top:5.3px"></span></div>
<div class="c" style="left:573px;width:99px"><span style="left:6.5px;top:5.3px">8-9999247030</span></div>
<div class="c" style="left:672px;width:77px"><span style="left:6.5px;top:5.3px">Осинцева<br>Ксения<br>Константи…</span></div>
<div class="c" style="left:749px;width:98px"><span style="left:6.5px;top:5.3px">&nbsp;&nbsp;&nbsp;&nbsp;&nbsp;&nbsp;д-ка<br>электрики ,<br>ниссан ноут , н…</span></div>
<div class="c" style="left:847px;width:77px"><span style="left:6.5px;top:5.3px"></span></div>
<div class="c" style="left:924px;width:82px"><span style="left:6.5px;top:5.3px">АП Сервис<br>(Отрадное)<br>ИП</span></div>
<div class="ab" style="left:0;top:44px;width:1006px;height:1px;background:rgba(0,0,0,0.075)"></div>
</div>
<div class="row" style="top:453px;height:33px;background:#ffffff">
<div class="c" style="left:0;width:130px;background:#88bbd9"><svg class="ab" style="left:7px;top:5.5px" width="13" height="10" viewBox="0 0 13 10"><rect x="0.5" y="0.5" width="8.8" height="7.2" fill="#eef0f5" stroke="#a3acbd" stroke-width="1"/><path d="M2.3 2.8h5.2M2.3 4.8h3.8" stroke="#c5cbd6" stroke-width="1"/><path d="M6 5.9l1.8 1.9 3.5-3.9" stroke="#1eaa2a" stroke-width="2" fill="none"/></svg><span style="left:25px;top:4.8px;font-size:10px">Заявка на ремонт</span></div>
<div class="c" style="left:129px;width:91px"><span style="right:7px;top:4.8px;font-size:10px">00000003495</span></div>
<div class="c" style="left:220px;width:115px"><span style="left:6.5px;top:5.3px">07.05.2025 15:05</span></div>
<div class="c" style="left:335px;width:238px"><span style="left:6.5px;top:5.3px">Костин Даниил Алексеевич</span></div>
<div class="c" style="left:573px;width:99px"><span style="left:6.5px;top:5.3px">9661491114</span></div>
<div class="c" style="left:672px;width:77px"><span style="left:6.5px;top:5.3px"></span></div>
<div class="c" style="left:749px;width:98px"><span style="left:6.5px;top:5.3px">ошибка по<br>топливной сист.</span></div>
<div class="c" style="left:847px;width:77px"><span style="left:6.5px;top:5.3px">Заявка на<br>ремонт № …</span></div>
<div class="c" style="left:924px;width:82px"><span style="left:6.5px;top:5.3px">АП Сервис<br>(Текстильщ…</span></div>
<div class="ab" style="left:0;top:32px;width:1006px;height:1px;background:rgba(0,0,0,0.075)"></div>
</div>
<div class="row" style="top:486px;height:21px;background:#f8f8f8">
<div class="c" style="left:0;width:130px;background:#fbe0e2"><svg class="ab" style="left:7px;top:5.5px" width="13" height="10" viewBox="0 0 13 10"><rect x="0.5" y="0.5" width="8.8" height="7.2" fill="#eef0f5" stroke="#a3acbd" stroke-width="1"/><path d="M2.3 2.8h5.2M2.3 4.8h3.8" stroke="#c5cbd6" stroke-width="1"/><path d="M6 5.9l1.8 1.9 3.5-3.9" stroke="#1eaa2a" stroke-width="2" fill="none"/></svg><span style="left:25px;top:4.8px;font-size:10px">Отменен</span></div>
<div class="c" style="left:129px;width:91px"><span style="right:7px;top:4.8px;font-size:10px">00000002795</span></div>
<div class="c" style="left:220px;width:115px"><span style="left:6.5px;top:4.8px">22.04.2025 20:53</span></div>
<div class="c" style="left:335px;width:238px"><span style="left:6.5px;top:4.8px">Ледовский Николай Сергеевич</span></div>
<div class="c" style="left:573px;width:99px"><span style="left:6.5px;top:4.8px">Есть переписка…</span></div>
<div class="c" style="left:672px;width:77px"><span style="left:6.5px;top:4.8px">Осинцева …</span></div>
<div class="c" style="left:749px;width:98px"><span style="left:6.5px;top:4.8px">Заявка с сайта</span></div>
<div class="c" style="left:847px;width:77px"><span style="left:6.5px;top:4.8px"></span></div>
<div class="c" style="left:924px;width:82px"><span style="left:6.5px;top:4.8px">УПРАВЛЕН…</span></div>
<div class="ab" style="left:0;top:20px;width:1006px;height:1px;background:rgba(0,0,0,0.075)"></div>
</div>
<div class="ab" style="left:942px;top:515px;width:76px;height:17px;border:1px solid #c6c6c6;background:#fff"></div>
<div class="ab" style="left:943px;top:515px;width:37px;height:16px;background:linear-gradient(#fff,#ececec)"></div>
<div class="sep" style="left:961px;top:515px;height:16px;background:#c8c8c8"></div>
<div class="sep" style="left:980px;top:515px;height:16px;background:#c8c8c8"></div>
<div class="sep" style="left:998px;top:515px;height:16px;background:#c8c8c8"></div>
<svg class="ab" style="left:947px;top:520px" width="10" height="7" viewBox="0 0 10 7"><path d="M0.8 1h8.4" stroke="#333" stroke-width="1.1"/><path d="M0.8 6L5 1.5L9.2 6z" fill="#333"/></svg>
<svg class="ab" style="left:966px;top:520px" width="10" height="7" viewBox="0 0 10 7"><path d="M0.8 6L5 1.7L9.2 6z" fill="#333"/></svg>
<svg class="ab" style="left:985px;top:520px" width="10" height="7" viewBox="0 0 10 7"><path d="M1 1.8L5 6L9 1.8z" fill="#a8a8a8"/></svg>
<svg class="ab" style="left:1004px;top:520px" width="10" height="8" viewBox="0 0 10 8"><path d="M0.8 1.5L5 5.8L9.2 1.5z" fill="#a8a8a8"/><path d="M0.8 6.8h8.4" stroke="#c8c8c8" stroke-width="1"/></svg>
</body></html>
